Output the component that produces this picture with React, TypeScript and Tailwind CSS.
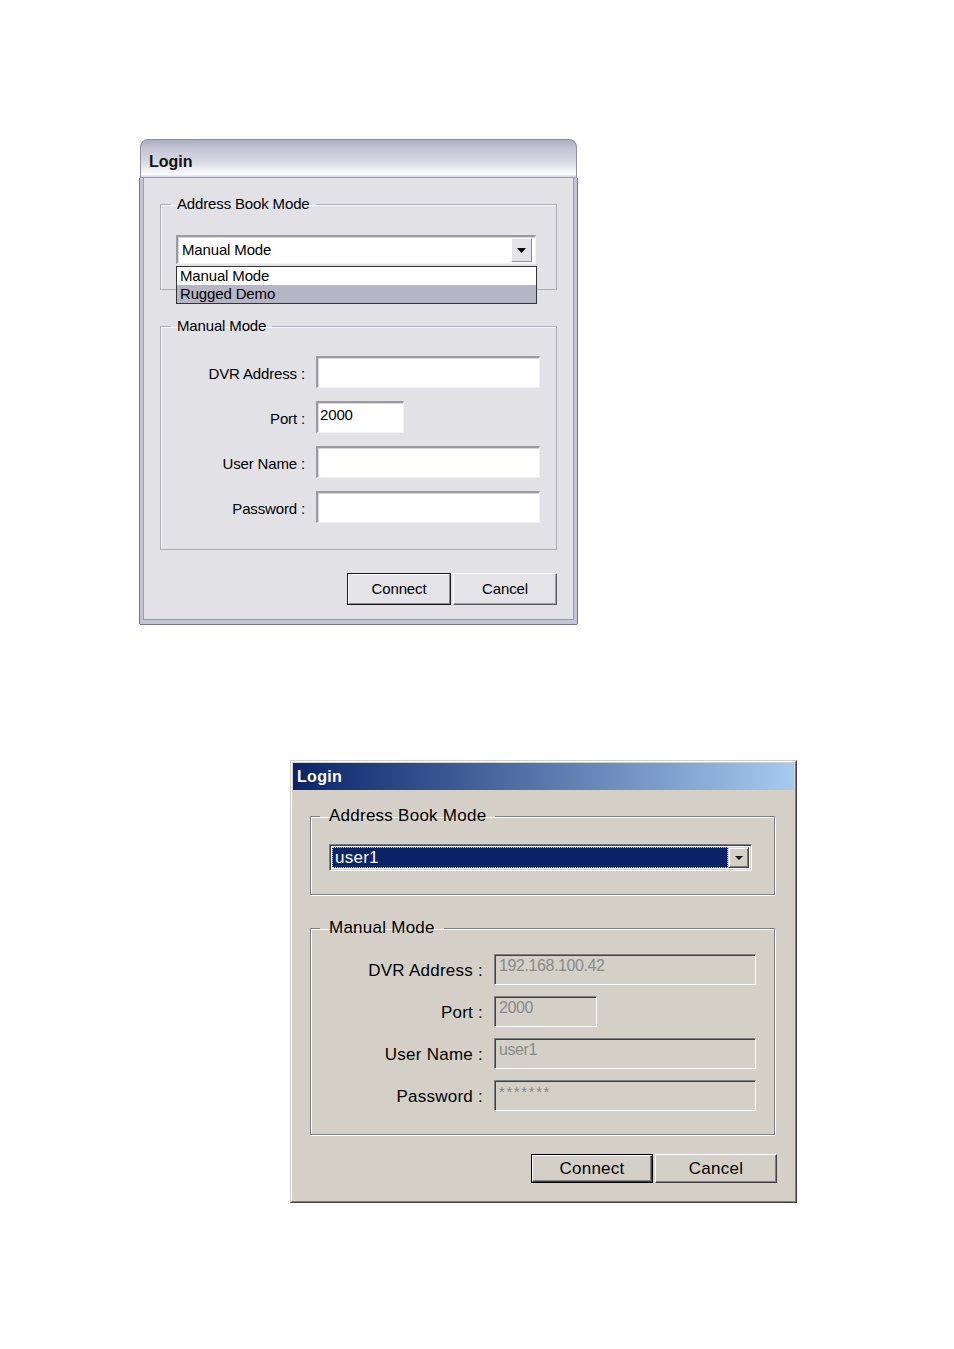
import React from "react";

function Tri({ w = 9, h = 5 }: { w?: number; h?: number }) {
  return (
    <svg width={w} height={h} viewBox={`0 0 ${w} ${h}`}>
      <polygon points={`0,0 ${w},0 ${w / 2},${h}`} fill="#000" />
    </svg>
  );
}

function XpInput({ w, value }: { w: string; value?: string }) {
  return (
    <div
      className={`${w} h-[32px] bg-white border-t-2 border-l-2 border-r border-b border-t-[#9a9aa0] border-l-[#9a9aa0] border-r-[#f2f2f4] border-b-[#f2f2f4] shadow-[inset_1px_1px_0_#d8d8dc] pl-[2px] pt-[3px] leading-[17px]`}
    >
      {value}
    </div>
  );
}

function ClassicInput({ w, value, stars }: { w: string; value: string; stars?: boolean }) {
  return (
    <div
      className={`${w} h-[31px] bg-[#d4d0c8] border border-t-[#808080] border-l-[#808080] border-r-white border-b-white shadow-[inset_1px_1px_0_#404040,inset_-1px_-1px_0_#d4d0c8] pl-[4px] pt-[1px] leading-[20px] text-[#8a8a8a] ${
        stars ? "text-[15px] tracking-[1.6px]" : "text-[16px] tracking-[-0.4px]"
      }`}
    >
      {value}
    </div>
  );
}

export default function App() {
  return (
    <div className="w-[954px] h-[1349px] bg-white flex flex-col pt-[139px] font-['Liberation_Sans',Arial,sans-serif] text-black">
      {/* Dialog 1 - XP silver */}
      <div className="ml-[140px] w-[437px] text-[15px] tracking-[-0.15px]">
        <div className="h-[39px] rounded-t-[8px] border border-b-0 border-[#8e8ea6] bg-[linear-gradient(to_bottom,#adadc3_0%,#c4c4d5_22%,#d7d7e2_55%,#f3f3f7_84%,#ffffff_90%,#bfbfcf_100%)] flex items-center pl-[8px] pt-[5px] shadow-[inset_0_-1px_0_#9c9cb0]">
          <span className="font-bold text-[16px] text-[#111] tracking-normal">Login</span>
        </div>
        <div className="bg-[#e2e1e6] border-x-[3px] border-b-[4px] border-[#c4c4d4] shadow-[inset_1px_0_0_#9a9aae,inset_-1px_0_0_#9a9aae,inset_0_-1px_0_#9a9aae,-1px_0_0_#74748e,1px_0_0_#74748e,0_1px_0_#74748e] px-[17px] pt-[18px] pb-[15px]">
          <fieldset className="border border-[#adadb8] shadow-[inset_1px_1px_0_#f8f8fa]">
            <legend className="ml-[10px] px-[6px] leading-[16px]">Address Book Mode</legend>
            <div className="pl-[15px] pr-[20px] pt-[23px] pb-[25px]">
              <div className="relative">
                <div className="h-[29px] flex items-center bg-white border-t-2 border-l-2 border-r border-b border-t-[#9a9aa0] border-l-[#9a9aa0] border-r-[#f2f2f4] border-b-[#f2f2f4] shadow-[inset_1px_1px_0_#d8d8dc]">
                  <span className="flex-1 pl-[4px] pt-[1px]">Manual Mode</span>
                  <div className="w-[21px] h-[24px] mr-[3px] bg-[#e4e3e8] border border-t-white border-l-white border-r-[#8c8c94] border-b-[#8c8c94] flex items-center justify-center">
                    <Tri />
                  </div>
                </div>
                <div className="absolute left-0 top-[31px] w-[361px] z-10 border border-[#333] bg-white">
                  <div className="h-[18px] leading-[18px] pl-[3px]">Manual Mode</div>
                  <div className="h-[18px] leading-[18px] pl-[3px] bg-[#b5b5c5]">Rugged Demo</div>
                </div>
              </div>
            </div>
          </fieldset>

          <fieldset className="mt-[28px] border border-[#adadb8] shadow-[inset_1px_1px_0_#f8f8fa]">
            <legend className="ml-[10px] px-[6px] leading-[16px]">Manual Mode</legend>
            <div className="pt-[22px] pb-[26px] flex flex-col gap-[13px]">
              {[
                ["DVR Address :", "w-[224px]", ""],
                ["Port :", "w-[88px]", "2000"],
                ["User Name :", "w-[224px]", ""],
                ["Password :", "w-[224px]", ""],
              ].map(([label, w, v]) => (
                <div key={label} className="flex items-center">
                  <div className="w-[145px] text-right pr-[1px] pt-[4px]">{label}</div>
                  <div className="ml-[10px]">
                    <XpInput w={w} value={v} />
                  </div>
                </div>
              ))}
            </div>
          </fieldset>

          <div className="flex justify-end gap-[2px] mt-[23px]">
            <div className="w-[104px] h-[32px] border border-[#1a1a1a] bg-[#e4e3e8]">
              <div className="h-full border border-t-white border-l-white border-r-[#8c8c94] border-b-[#8c8c94] flex items-center justify-center">
                Connect
              </div>
            </div>
            <div className="w-[104px] h-[32px] bg-[#e4e3e8] border border-t-white border-l-white border-r-[#5a5a64] border-b-[#5a5a64] shadow-[inset_-1px_-1px_0_#a0a0a8] flex items-center justify-center">
              Cancel
            </div>
          </div>
        </div>
      </div>

      {/* Dialog 2 - classic */}
      <div className="mt-[136px] ml-[290px] w-[507px] text-[17px] tracking-[0.25px]">
        <div className="border border-t-[#d4d0c8] border-l-[#d4d0c8] border-r-[#404040] border-b-[#404040] bg-[#d4d0c8]">
          <div className="border border-t-white border-l-white border-r-[#808080] border-b-[#808080] p-[1px]">
            <div className="h-[27px] bg-[linear-gradient(to_right,#0a246a,#a6caf0)] flex items-center pl-[4px]">
              <span className="font-bold text-[16px] text-white tracking-[0.3px]">Login</span>
            </div>
            <div className="pl-[17px] pr-[19px] pt-[16px] pb-[17px]">
              <fieldset className="border border-[#808080] shadow-[inset_1px_1px_0_#fff,1px_1px_0_#fff]">
                <legend className="ml-[9px] px-[9px] leading-[20px]">Address Book Mode</legend>
                <div className="pl-[18px] pr-[22px] pt-[18px] pb-[23px]">
                  <div className="h-[27px] flex bg-white border border-t-[#808080] border-l-[#808080] border-r-white border-b-white shadow-[inset_1px_1px_0_#404040,inset_-1px_-1px_0_#d4d0c8] p-[2px]">
                    <div className="flex-1 bg-[#0a246a] border border-dotted border-[#d8d49a] text-white leading-[19px] pl-[2px]">
                      user1
                    </div>
                    <div className="w-[21px] bg-[#d4d0c8] border border-t-[#d4d0c8] border-l-[#d4d0c8] border-r-[#404040] border-b-[#404040] shadow-[inset_1px_1px_0_#fff,inset_-1px_-1px_0_#808080] flex items-center justify-center">
                      <Tri w={8} h={4} />
                    </div>
                  </div>
                </div>
              </fieldset>

              <fieldset className="mt-[23px] border border-[#808080] shadow-[inset_1px_1px_0_#fff,1px_1px_0_#fff]">
                <legend className="ml-[9px] px-[9px] leading-[20px]">Manual Mode</legend>
                <div className="pt-[16px] pb-[23px] flex flex-col gap-[11px]">
                  {[
                    ["DVR Address :", "w-[262px]", "192.168.100.42", false],
                    ["Port :", "w-[103px]", "2000", false],
                    ["User Name :", "w-[262px]", "user1", false],
                    ["Password :", "w-[262px]", "*******", true],
                  ].map(([label, w, v, s]) => (
                    <div key={label as string} className="flex items-center">
                      <div className="w-[172px] text-right pt-[2px]">{label as string}</div>
                      <div className="ml-[11px]">
                        <ClassicInput w={w as string} value={v as string} stars={s as boolean} />
                      </div>
                    </div>
                  ))}
                </div>
              </fieldset>

              <div className="flex justify-end gap-[2px] mt-[19px] mr-[-2px]">
                <div className="w-[122px] h-[29px] border border-black bg-[#d4d0c8]">
                  <div className="h-full border border-t-white border-l-white border-r-[#404040] border-b-[#404040] shadow-[inset_-1px_-1px_0_#808080] flex items-center justify-center">
                    Connect
                  </div>
                </div>
                <div className="w-[122px] h-[29px] bg-[#d4d0c8] border border-t-white border-l-white border-r-[#404040] border-b-[#404040] shadow-[inset_-1px_-1px_0_#808080] flex items-center justify-center">
                  Cancel
                </div>
              </div>
            </div>
          </div>
        </div>
      </div>
    </div>
  );
}
